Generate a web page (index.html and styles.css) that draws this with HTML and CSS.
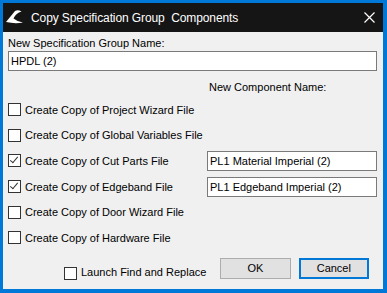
FILE: index.html
```html
<!DOCTYPE html>
<html lang="en">
<head>
    <meta charset="UTF-8">
    <title>Copy Specification Group Components</title>
    <link rel="stylesheet" href="styles.css">
</head>
<body>
    <div class="window">
        <div class="titlebar">
            <svg class="app-icon" width="18" height="15" viewBox="0 0 18 15">
                <path d="M0 12 L9 1 Q12 -0.5 15.5 1.5 Q10 3 7.5 8.5 Q11 11.5 17 12.5 Q9 14 0 12 Z" fill="#ffffff"/>
            </svg>
            <span class="title">Copy Specification Group&nbsp; Components</span>
            <svg class="close" width="11" height="11" viewBox="0 0 11 11">
                <path d="M0.5 0.5 L10.5 10.5 M10.5 0.5 L0.5 10.5" stroke="#ffffff" stroke-width="1.2"/>
            </svg>
        </div>

        <div class="content">
            <label class="group-label" for="groupName">New Specification Group Name:</label>
            <input type="text" id="groupName" class="text-box" value="HPDL (2)">

            <div class="component-head">New Component Name:</div>

            <div class="rows">
                <div class="row">
                    <span class="check"></span>
                    <span class="caption">Create Copy of Project Wizard File</span>
                </div>
                <div class="row">
                    <span class="check"></span>
                    <span class="caption">Create Copy of Global Variables File</span>
                </div>
                <div class="row">
                    <span class="check checked"></span>
                    <span class="caption">Create Copy of Cut Parts File</span>
                    <input type="text" class="text-box name-box" value="PL1 Material Imperial (2)">
                </div>
                <div class="row">
                    <span class="check checked"></span>
                    <span class="caption">Create Copy of Edgeband File</span>
                    <input type="text" class="text-box name-box" value="PL1 Edgeband Imperial (2)">
                </div>
                <div class="row">
                    <span class="check"></span>
                    <span class="caption">Create Copy of Door Wizard File</span>
                </div>
                <div class="row">
                    <span class="check"></span>
                    <span class="caption">Create Copy of Hardware File</span>
                </div>
            </div>

            <div class="footer">
                <span class="check footer-check"></span>
                <span class="caption launch">Launch Find and Replace</span>
                <button class="btn">OK</button>
                <button class="btn btn-default">Cancel</button>
            </div>
        </div>
    </div>
</body>
</html>
```

FILE: styles.css
```css
html, body {
    margin: 0;
    padding: 0;
}
body {
    width: 387px;
    height: 293px;
    overflow: hidden;
    font-family: 'Liberation Sans', Arial, sans-serif;
    font-size: 11px;
    color: #000000;
}
.window {
    box-sizing: border-box;
    width: 387px;
    height: 293px;
    border-style: solid;
    border-color: #0078d7;
    border-width: 3px 4px 4px 3px;
    background-color: #f0f0f0;
    display: flex;
    flex-direction: column;
}
.titlebar {
    height: 29px;
    background-color: #151515;
    display: flex;
    align-items: center;
    color: #ffffff;
}
.app-icon {
    margin-left: 3px;
    margin-right: 7px;
}
.title {
    font-family: 'Liberation Sans', Arial, sans-serif;
    font-size: 12px;
    letter-spacing: -0.1px;
    flex: 1;
}
.close {
    margin-right: 8px;
}
.content {
    flex: 1;
    padding: 4px 6px 0 5px;
    display: flex;
    flex-direction: column;
}
.group-label {
    display: block;
    height: 15px;
    line-height: 15px;
}
.text-box {
    box-sizing: border-box;
    height: 20px;
    border: 1px solid #7a7a7a;
    background: #ffffff;
    font-family: 'Liberation Sans', Arial, sans-serif;
    font-size: 11px;
    padding: 0 2px;
    margin: 0;
    outline: none;
}
.component-head {
    margin-top: 9px;
    margin-left: 201px;
    height: 14px;
    line-height: 14px;
}
.rows {
    margin-top: 3px;
}
.row {
    height: 25.6px;
    display: flex;
    align-items: center;
}
.check {
    box-sizing: border-box;
    width: 13px;
    height: 13px;
    border: 1px solid #333333;
    background: #ffffff;
    margin-right: 4px;
    position: relative;
    flex: none;
}
.check.checked::after {
    content: "";
    position: absolute;
    left: 3px;
    top: 0px;
    width: 3px;
    height: 7px;
    border-right: 1px solid #333333;
    border-bottom: 1px solid #333333;
    transform: rotate(40deg);
}
.caption {
    white-space: nowrap;
    flex: 1;
}
.name-box {
    width: 170px;
    flex: none;
}
.footer {
    margin-top: 7px;
    display: flex;
    align-items: flex-start;
    padding-left: 56px;
}
.footer-check {
    margin-top: 9px;
}
.launch {
    flex: none;
    margin-top: 8px;
    line-height: 13px;
    margin-right: 14px;
}
.btn {
    box-sizing: border-box;
    width: 74px;
    height: 21px;
    background: #e1e1e1;
    border: 1px solid #adadad;
    font-family: 'Liberation Sans', Arial, sans-serif;
    font-size: 11px;
    color: #000000;
    padding: 0;
    margin-right: 8px;
}
.btn-default {
    border: 2px solid #0078d7;
}
```
